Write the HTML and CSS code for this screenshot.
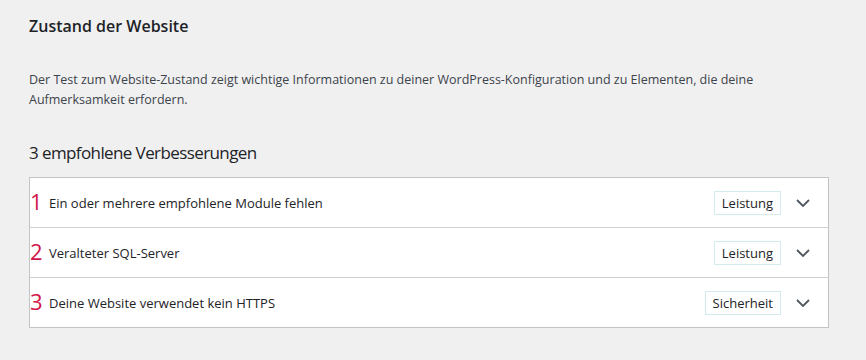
FILE: index.html
```html
<!DOCTYPE html>
<html lang="de">

<head>
  <meta charset="utf-8">
  <title>Zustand der Website</title>
  <link rel="stylesheet" href="styles.css">
</head>

<body>

  <div class="health">
    <h1 class="title">Zustand der Website</h1>

    <p class="intro">Der Test zum Website-Zustand zeigt wichtige Informationen zu deiner WordPress-Konfiguration und zu Elementen, die deine Aufmerksamkeit erfordern.</p>

    <h2 class="count">3 empfohlene Verbesserungen</h2>

    <div class="issues">
      <div class="issue">
        <span class="num">1</span>
        <span class="label">Ein oder mehrere empfohlene Module fehlen</span>
        <span class="badge">Leistung</span>
        <svg class="chevron" width="14" height="8" viewBox="0 0 14 8">
          <path d="M1 1 L7 7 L13 1" fill="none" stroke="#50575e" stroke-width="1.8"></path>
        </svg>
      </div>
      <div class="issue">
        <span class="num">2</span>
        <span class="label">Veralteter SQL-Server</span>
        <span class="badge">Leistung</span>
        <svg class="chevron" width="14" height="8" viewBox="0 0 14 8">
          <path d="M1 1 L7 7 L13 1" fill="none" stroke="#50575e" stroke-width="1.8"></path>
        </svg>
      </div>
      <div class="issue">
        <span class="num">3</span>
        <span class="label">Deine Website verwendet kein HTTPS</span>
        <span class="badge">Sicherheit</span>
        <svg class="chevron" width="14" height="8" viewBox="0 0 14 8">
          <path d="M1 1 L7 7 L13 1" fill="none" stroke="#50575e" stroke-width="1.8"></path>
        </svg>
      </div>
    </div>
  </div>

</body>

</html>
```

FILE: styles.css
```css
body {
  margin: 0;
  background: #f0f0f1;
  font-family: "Open Sans", "Noto Sans", sans-serif;
  color: #1d2327;
}

.health {
  padding: 14px 37px 0 29px;
}

.title {
  margin: 0;
  font-size: 16px;
  font-weight: 600;
  line-height: 24px;
}

.intro {
  margin: 32px 0 0;
  font-size: 12.5px;
  line-height: 20px;
  color: #3c434a;
  max-width: 740px;
}

.count {
  margin: 30px 0 0;
  font-size: 17px;
  letter-spacing: -0.6px;
  font-weight: 400;
  line-height: 26px;
}

.issues {
  margin-top: 11px;
  background: #fff;
  border: 1px solid #c3c4c7;
}

.issue {
  display: flex;
  align-items: center;
  height: 49px;
  border-top: 1px solid #d0d1d3;
}

.issue:first-child {
  border-top: none;
}

.num {
  width: 19px;
  font-size: 22px;
  line-height: 24px;
  color: #d1164b;
  font-weight: 400;
  padding-bottom: 4px;
}

.label {
  flex: 1;
  font-size: 13px;
}

.badge {
  font-size: 13px;
  line-height: 22px;
  padding: 0 7px;
  border: 1px solid #d4ebee;
}

.chevron {
  margin: 0 18px 0 15px;
}
```
